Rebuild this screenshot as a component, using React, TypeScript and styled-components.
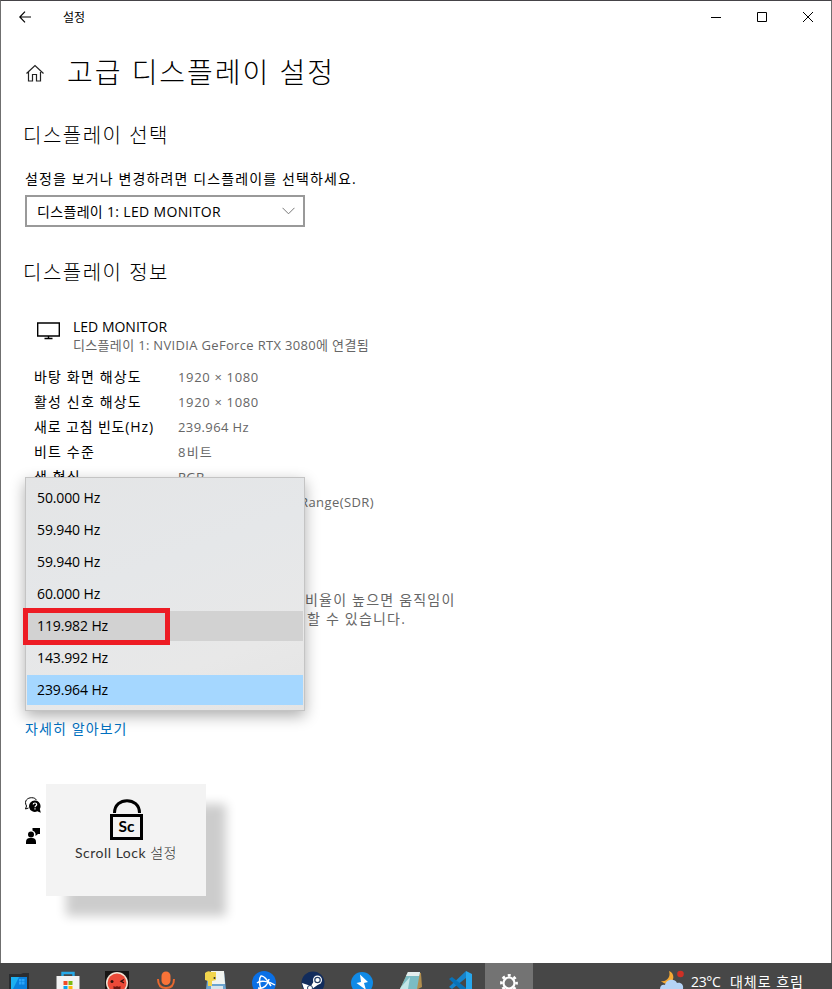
import React from "react";
import styled, { createGlobalStyle } from "styled-components";

const GlobalStyle = createGlobalStyle`
  * { box-sizing: border-box; }
  body { margin: 0; background: #fff; }
`;

const Desktop = styled.div`
  width: 832px;
  height: 989px;
  overflow: hidden;
  display: flex;
  flex-direction: column;
  font-family: "Open Sans", "Noto Sans CJK KR", sans-serif;
  font-size: 14px;
  color: #000;
`;

const Window = styled.div`
  position: relative;
  height: 963px;
  flex: none;
  background: #fff;
  border: 1px solid #6f6f6f;
  border-top-color: #454347;
  border-bottom: 0;
`;

const TitleBar = styled.header`
  height: 32px;
  display: flex;
  align-items: center;
  padding-left: 18px;
`;

const WindowTitle = styled.span`
  margin-left: 31px;
  flex: 1;
  font-size: 12px;
  line-height: 32px;
  padding-top: 1px;
`;

const Caption = styled.div`
  width: 46px;
  height: 32px;
  display: flex;
  align-items: center;
  justify-content: center;
`;

const Content = styled.main`
  padding-left: 24px;
`;

const PageHeader = styled.div`
  display: flex;
  align-items: center;
  height: 78px;
`;

const HomeIcon = styled.svg`
  margin-top: 2px;
`;

const PageTitle = styled.h1`
  margin: 0 0 0 22px;
  font-size: 28px;
  font-weight: 300;
  line-height: 40px;
  letter-spacing: 1.95px;
  white-space: nowrap;
`;

const SectionTitle = styled.h2`
  margin: 0 0 0 -2px;
  font-size: 20px;
  font-weight: 300;
  line-height: 30px;
  height: 30px;
  letter-spacing: 1.5px;
  padding-top: 1px;
`;

const Picker = styled.section`
  padding-top: 9px;
`;

const Label = styled.p`
  margin: 17px 0 0;
  height: 24px;
  line-height: 24px;
  letter-spacing: 1.12px;
  white-space: nowrap;
`;

const Select = styled.div`
  margin: 4px 0 30px;
  width: 280px;
  height: 32px;
  border: 2px solid #999;
  display: flex;
  align-items: center;
  justify-content: space-between;
  padding: 0 8px 0 10px;
  letter-spacing: 0.33px;
`;

const Monitor = styled.div`
  display: flex;
  margin-top: 29px;
  height: 49px;
  padding-left: 12px;
  gap: 13px;
`;

const MonitorIcon = styled.svg`
  margin-top: 6px;
`;

const MonitorName = styled.div`
  height: 20px;
  line-height: 22px;
`;

const MonitorDetail = styled.div`
  height: 18px;
  line-height: 18px;
  font-size: 13px;
  letter-spacing: 0.33px;
  color: #666;
  white-space: nowrap;
`;

const Specs = styled.dl`
  margin: 0;
  padding-left: 9px;
  display: grid;
  grid-template-columns: 144px 1fr;
  grid-auto-rows: 25px;
  line-height: 25px;
`;

const SpecName = styled.dt<{ $ls: number }>`
  line-height: 23px;
  white-space: nowrap;
  letter-spacing: ${(p) => p.$ls}px;
`;

const SpecValue = styled.dd<{ $ls: number }>`
  margin: 0;
  font-size: 13px;
  color: #666;
  letter-spacing: ${(p) => p.$ls}px;
`;

const Note = styled.p`
  margin: 75px 0 0 280px;
  height: 38px;
  line-height: 19px;
  letter-spacing: 1.2px;
  color: #666;
`;

const NoteLine = styled.span<{ $indent?: number }>`
  display: block;
  padding-left: ${(p) => p.$indent ?? 0}px;
`;

const Link = styled.a`
  display: block;
  margin-top: 89px;
  height: 24px;
  line-height: 24px;
  letter-spacing: 1.1px;
  color: #0070c0;
`;

const HelpIcons = styled.div`
  margin-top: 56px;
  margin-left: -1px;
  display: flex;
  flex-direction: column;
  gap: 13px;
`;

const Popup = styled.ul`
  position: absolute;
  left: 24px;
  top: 476px;
  width: 280px;
  height: 234px;
  margin: 0;
  padding: 5px 1px 0;
  list-style: none;
  border: 1px solid #c4c4c4;
  background: linear-gradient(160deg, #e4e5e6, #e5e7e9 40%, #e8e8e8 75%, #e4e4e4);
  box-shadow: 0 5px 14px rgba(0, 0, 0, 0.32);
`;

const Option = styled.li<{ $tone?: string }>`
  height: 30px;
  margin-bottom: 2px;
  padding-left: 10px;
  line-height: 29px;
  letter-spacing: -0.12px;
  background: ${(p) => p.$tone ?? "transparent"};
`;

const Highlight = styled.div`
  position: absolute;
  left: 22px;
  top: 607px;
  width: 147px;
  height: 37px;
  border: 5px solid #ed1c24;
`;

const LockToast = styled.aside`
  position: absolute;
  left: 45px;
  top: 783px;
  width: 160px;
  height: 112px;
  padding-top: 15px;
  background: #f3f3f3;
  box-shadow: 20px 20px 10px rgba(0, 0, 0, 0.2);
  display: flex;
  flex-direction: column;
  align-items: center;
`;

const LockIcon = styled.svg`
  margin-left: 2px;
`;

const LockText = styled.div`
  font-family: Lato, "Noto Sans CJK KR", sans-serif;
  font-size: 14px;
  letter-spacing: 0.5px;
  line-height: 24px;
  color: #333;
  white-space: nowrap;
`;

const LockTextKorean = styled.span`
  font-weight: 300;
`;

const TaskBar = styled.footer`
  height: 26px;
  flex: none;
  display: flex;
  background: #474747;
  padding-right: 28px;
`;

const TaskItem = styled.div<{ $active?: boolean }>`
  width: ${(p) => (p.$active ? 48 : 49.1)}px;
  height: 26px;
  flex: none;
  display: flex;
  justify-content: center;
  background: ${(p) => (p.$active ? "#737373" : "transparent")};
  &:first-child { margin-left: -6px; }
`;

const Weather = styled.div`
  margin-left: auto;
  display: flex;
  color: #fff;
  white-space: nowrap;
  line-height: 18px;
  height: 26px;
  padding-top: 10px;
`;

const WeatherIcon = styled.svg`
  margin-top: -10px;
`;

const Temperature = styled.span`
  margin-left: 5px;
  width: 39px;
  letter-spacing: -0.3px;
`;

const Forecast = styled.span`
  letter-spacing: 1px;
`;

const Glyph = ({ children }: { children: React.ReactNode }) => (
  <svg width="26" height="26" viewBox="0 0 26 26">{children}</svg>
);

const specs: [string, number, string, number][] = [
  ["바탕 화면 해상도", 1.15, "1920 × 1080", 0.66],
  ["활성 신호 해상도", 1.15, "1920 × 1080", 0.66],
  ["새로 고침 빈도(Hz)", 0.85, "239.964 Hz", 0.4],
  ["비트 수준", 1.15, "8비트", 1.2],
  ["색 형식", 1.15, "RGB", 0.2],
  ["색 공간", 1.15, "Standard Dynamic Range(SDR)", 0.42],
];

const rates: [string, string?][] = [
  ["50.000 Hz"],
  ["59.940 Hz"],
  ["59.940 Hz"],
  ["60.000 Hz"],
  ["119.982 Hz", "#d2d2d2"],
  ["143.992 Hz"],
  ["239.964 Hz", "#a5d7ff"],
];

const taskIcons = [
  <Glyph key="pc">
    <path d="M3 11h12l2-1h6v16H3z" fill="#2b2d30" />
    <path d="M5 14h16v12H5z" fill="#0a80dc" />
    <path d="M5 14h8L7 26H5z" fill="#1cb0f1" />
    <path d="M13 16h2.500v2.500H13zM16 16h2.500v2.500H16zM13 19h2.500v2.500H13zM16 19h2.500v2.500H16z" fill="#2ba4f8" />
  </Glyph>,
  <Glyph key="store">
    <path d="M7.500 14v-4h11v4" fill="none" stroke="#25a9e8" strokeWidth="2.400" />
    <path d="M1.500 13h23v13h-23z" fill="#f3f3f3" />
    <path d="M8.500 18h4v4h-4z" fill="#f04b26" />
    <path d="M13.500 18h4v4h-4z" fill="#7dba13" />
    <path d="M8.500 23h4v3h-4z" fill="#09a4ee" />
    <path d="M13.500 23h4v3h-4z" fill="#fdb80c" />
  </Glyph>,
  <Glyph key="drum">
    <path d="M1 8h24v18H1z" fill="#171514" />
    <circle cx="13" cy="20" r="11" fill="#f2e5d7" />
    <circle cx="13" cy="20" r="9.500" fill="#ec4a38" />
    <circle cx="8" cy="18.500" r="1.500" fill="#31110d" />
    <path d="M20 16.500l-3 1.800 3 1.500" fill="none" stroke="#31110d" strokeWidth="1.300" />
    <path d="M9.500 23q2 1.500 3.500 0q1.500 1.500 3.500 0v3h-7z" fill="#6b1811" />
  </Glyph>,
  <Glyph key="mic">
    <rect x="8.500" y="8.500" width="9" height="13.500" rx="4.500" fill="#fa7338" />
    <path d="M5 16c0 6 3 9 8 9s8-3 8-9" fill="none" stroke="#e8682f" strokeWidth="2" />
  </Glyph>,
  <Glyph key="save">
    <path d="M9 8l13 1 2 17H4l1-8z" fill="#6ca4cf" />
    <path d="M9 8h13l1 13H10z" fill="#f1f3ef" />
    <path d="M3 10q3-3 6-1h5v8l-4 1v5H6v-5l-3-1z" fill="#f2d54d" />
    <circle cx="12.500" cy="15" r="1" fill="#333" />
    <path d="M9 23h12v3H9z" fill="#d8e4ea" />
  </Glyph>,
  <Glyph key="battle">
    <circle cx="13" cy="20" r="12" fill="#0a70e6" />
    <g fill="none" stroke="#fff" strokeWidth="1.500">
      <path d="M10 26c-2-5-2-11 0-13 3-1 7 5 10 10" />
      <path d="M6 20c3-3 12-2 18 2" />
      <path d="M7 25c6 1 10-3 11-9" />
    </g>
  </Glyph>,
  <Glyph key="steam">
    <circle cx="13" cy="20" r="11.500" fill="#122c5c" />
    <path d="M2 20l9 3 3-5 5 3-7 5H4z" fill="#fff" />
    <circle cx="17.500" cy="17" r="4.500" fill="#fff" />
    <circle cx="17.500" cy="17" r="2.700" fill="none" stroke="#223b63" strokeWidth="1.200" />
    <circle cx="10" cy="25" r="2.500" fill="none" stroke="#223b63" />
  </Glyph>,
  <Glyph key="bolt">
    <circle cx="13" cy="20" r="11" fill="#108ae6" />
    <path d="M11 11.500l8 7.500-4 1 2 7-9.500-7 4.500-1z" fill="#fff" />
  </Glyph>,
  <Glyph key="notepad">
    <path d="M10 9l13 1 1 14-4 2H2z" fill="#b18e4f" />
    <path d="M10 9h12l-3 17H2z" fill="#7bbcc4" />
    <path d="M10 9h12l-1 4H8z" fill="#e5eeee" />
    <path d="M3 24l9-10-2 12H2z" fill="#c2e6e7" />
  </Glyph>,
  <Glyph key="code">
    <path d="M19 8l6 3v15h-6z" fill="#27a7ed" />
    <path d="M19 8v7L5 26l-3-2z" fill="#1684cc" />
    <path d="M2 16l3-2 14 11v1h-6z" fill="#0872b8" />
  </Glyph>,
];

export default function App() {
  return (
    <Desktop>
      <GlobalStyle />
      <Window>
        <TitleBar>
          <svg width="13" height="12" viewBox="0 0 13 12" fill="none" stroke="#000" strokeWidth="1.200">
            <path d="M6 .7L.8 6 6 11.300M.8 6H12" />
          </svg>
          <WindowTitle>설정</WindowTitle>
          <Caption><svg width="10" height="10"><path d="M0 5.500h10" stroke="#000" /></svg></Caption>
          <Caption><svg width="10" height="10"><path d="M.5.5h9v9h-9z" fill="none" stroke="#000" /></svg></Caption>
          <Caption><svg width="10" height="10"><path d="M0 0l10 10M10 0L0 10" stroke="#000" /></svg></Caption>
        </TitleBar>
        <Content>
          <PageHeader>
            <HomeIcon width="20" height="20" viewBox="0 0 20 20" fill="none" stroke="#222" strokeWidth="1.200">
              <path d="M1.500 10.500L10 2.500l8.500 8M3.500 9v9h4v-6.500h4V18h4V9" />
            </HomeIcon>
            <PageTitle>고급 디스플레이 설정</PageTitle>
          </PageHeader>
          <Picker>
            <SectionTitle>디스플레이 선택</SectionTitle>
            <Label>설정을 보거나 변경하려면 디스플레이를 선택하세요.</Label>
            <Select>
              <span>디스플레이 1: LED MONITOR</span>
              <svg width="13" height="8" viewBox="0 0 13 8" fill="none" stroke="#777"><path d="M.5.8l6 6 6-6" /></svg>
            </Select>
          </Picker>
          <SectionTitle>디스플레이 정보</SectionTitle>
          <Monitor>
            <MonitorIcon width="23" height="18" viewBox="0 0 23 18" fill="none" stroke="#000">
              <path d="M.7 1h21.600v13H.7z" strokeWidth="1.400" />
              <path d="M11.500 14v2.500M7.500 16.500h8" strokeWidth="1.400" />
            </MonitorIcon>
            <div>
              <MonitorName>LED MONITOR</MonitorName>
              <MonitorDetail>디스플레이 1: NVIDIA GeForce RTX 3080에 연결됨</MonitorDetail>
            </div>
          </Monitor>
          <Specs>
            {specs.map(([name, nameSpacing, value, valueSpacing]) => (
              <React.Fragment key={name}>
                <SpecName $ls={nameSpacing}>{name}</SpecName>
                <SpecValue $ls={valueSpacing}>{value}</SpecValue>
              </React.Fragment>
            ))}
          </Specs>
          <Note>
            <NoteLine>비율이 높으면 움직임이</NoteLine>
            <NoteLine $indent={2}>할 수 있습니다.</NoteLine>
          </Note>
          <Link>자세히 알아보기</Link>
          <HelpIcons>
            <svg width="18" height="17" viewBox="0 0 18 17">
              <path d="M1.500 12l1-3C-.5 3.500 4 .7 7.500.7c3 0 4 1 5 2.500M1.500 12l3-1" fill="none" stroke="#000" />
              <path d="M11 3.500a5.700 5.700 0 0 1 4.800 8.500l1 3.700-3.500-1.400A5.700 5.700 0 1 1 11 3.500z" fill="#000" />
              <path d="M9.200 7.500c0-2 3.500-2 3.500 0 0 1.300-1.700 1.200-1.700 2.700M11 11.300v1.300" fill="none" stroke="#fff" strokeWidth="1.200" />
            </svg>
            <svg width="18" height="17" viewBox="0 0 18 17">
              <circle cx="7" cy="7.500" r="3" />
              <path d="M2 17v-2q0-4 4-4h2q4 0 4 4v2zM8.500 1H16v6h-2l-2.500 2V6.500q-.5-2-3-3z" />
            </svg>
          </HelpIcons>
        </Content>
        <Popup>
          {rates.map(([rate, tone], i) => <Option key={i} $tone={tone}>{rate}</Option>)}
        </Popup>
        <Highlight />
        <LockToast>
          <LockIcon width="34" height="42" viewBox="0 0 34 42">
            <path d="M4.500 14C4.500-2.500 29.500-2.500 29.500 14" fill="none" stroke="#000" strokeWidth="3" />
            <path d="M1.500 16.500h30v23h-30z" fill="none" stroke="#000" strokeWidth="3" />
            <text x="16.500" y="33" textAnchor="middle" fontFamily="Lato" fontSize="15.500" fontWeight="700">Sc</text>
          </LockIcon>
          <LockText>Scroll Lock <LockTextKorean>설정</LockTextKorean></LockText>
        </LockToast>
      </Window>
      <TaskBar>
        {taskIcons.map((icon) => <TaskItem key={icon.key}>{icon}</TaskItem>)}
        <TaskItem $active>
          <Glyph>
            <g fill="none" stroke="#fff">
              <circle cx="13" cy="20" r="5.500" strokeWidth="2.200" />
              <circle cx="13" cy="20" r="7.600" strokeWidth="2.600" strokeDasharray="2.980 2.990" strokeDashoffset="1.490" />
            </g>
          </Glyph>
        </TaskItem>
        <Weather>
          <WeatherIcon width="28" height="26" viewBox="0 0 28 26">
            <path d="M11 8c6 2 6 11-1 13-3 0-5-1-7-3 6 1 10-4 8-10z" fill="#f4a934" />
            <path d="M2 26c0-4 3-5 5-4 1-6 10-7 12-2 4-1 7 2 6 6z" fill="#b5d3f6" />
            <circle cx="22.500" cy="11" r="3.300" fill="#ce3025" />
          </WeatherIcon>
          <Temperature>23°C</Temperature>
          <Forecast>대체로 흐림</Forecast>
        </Weather>
      </TaskBar>
    </Desktop>
  );
}
